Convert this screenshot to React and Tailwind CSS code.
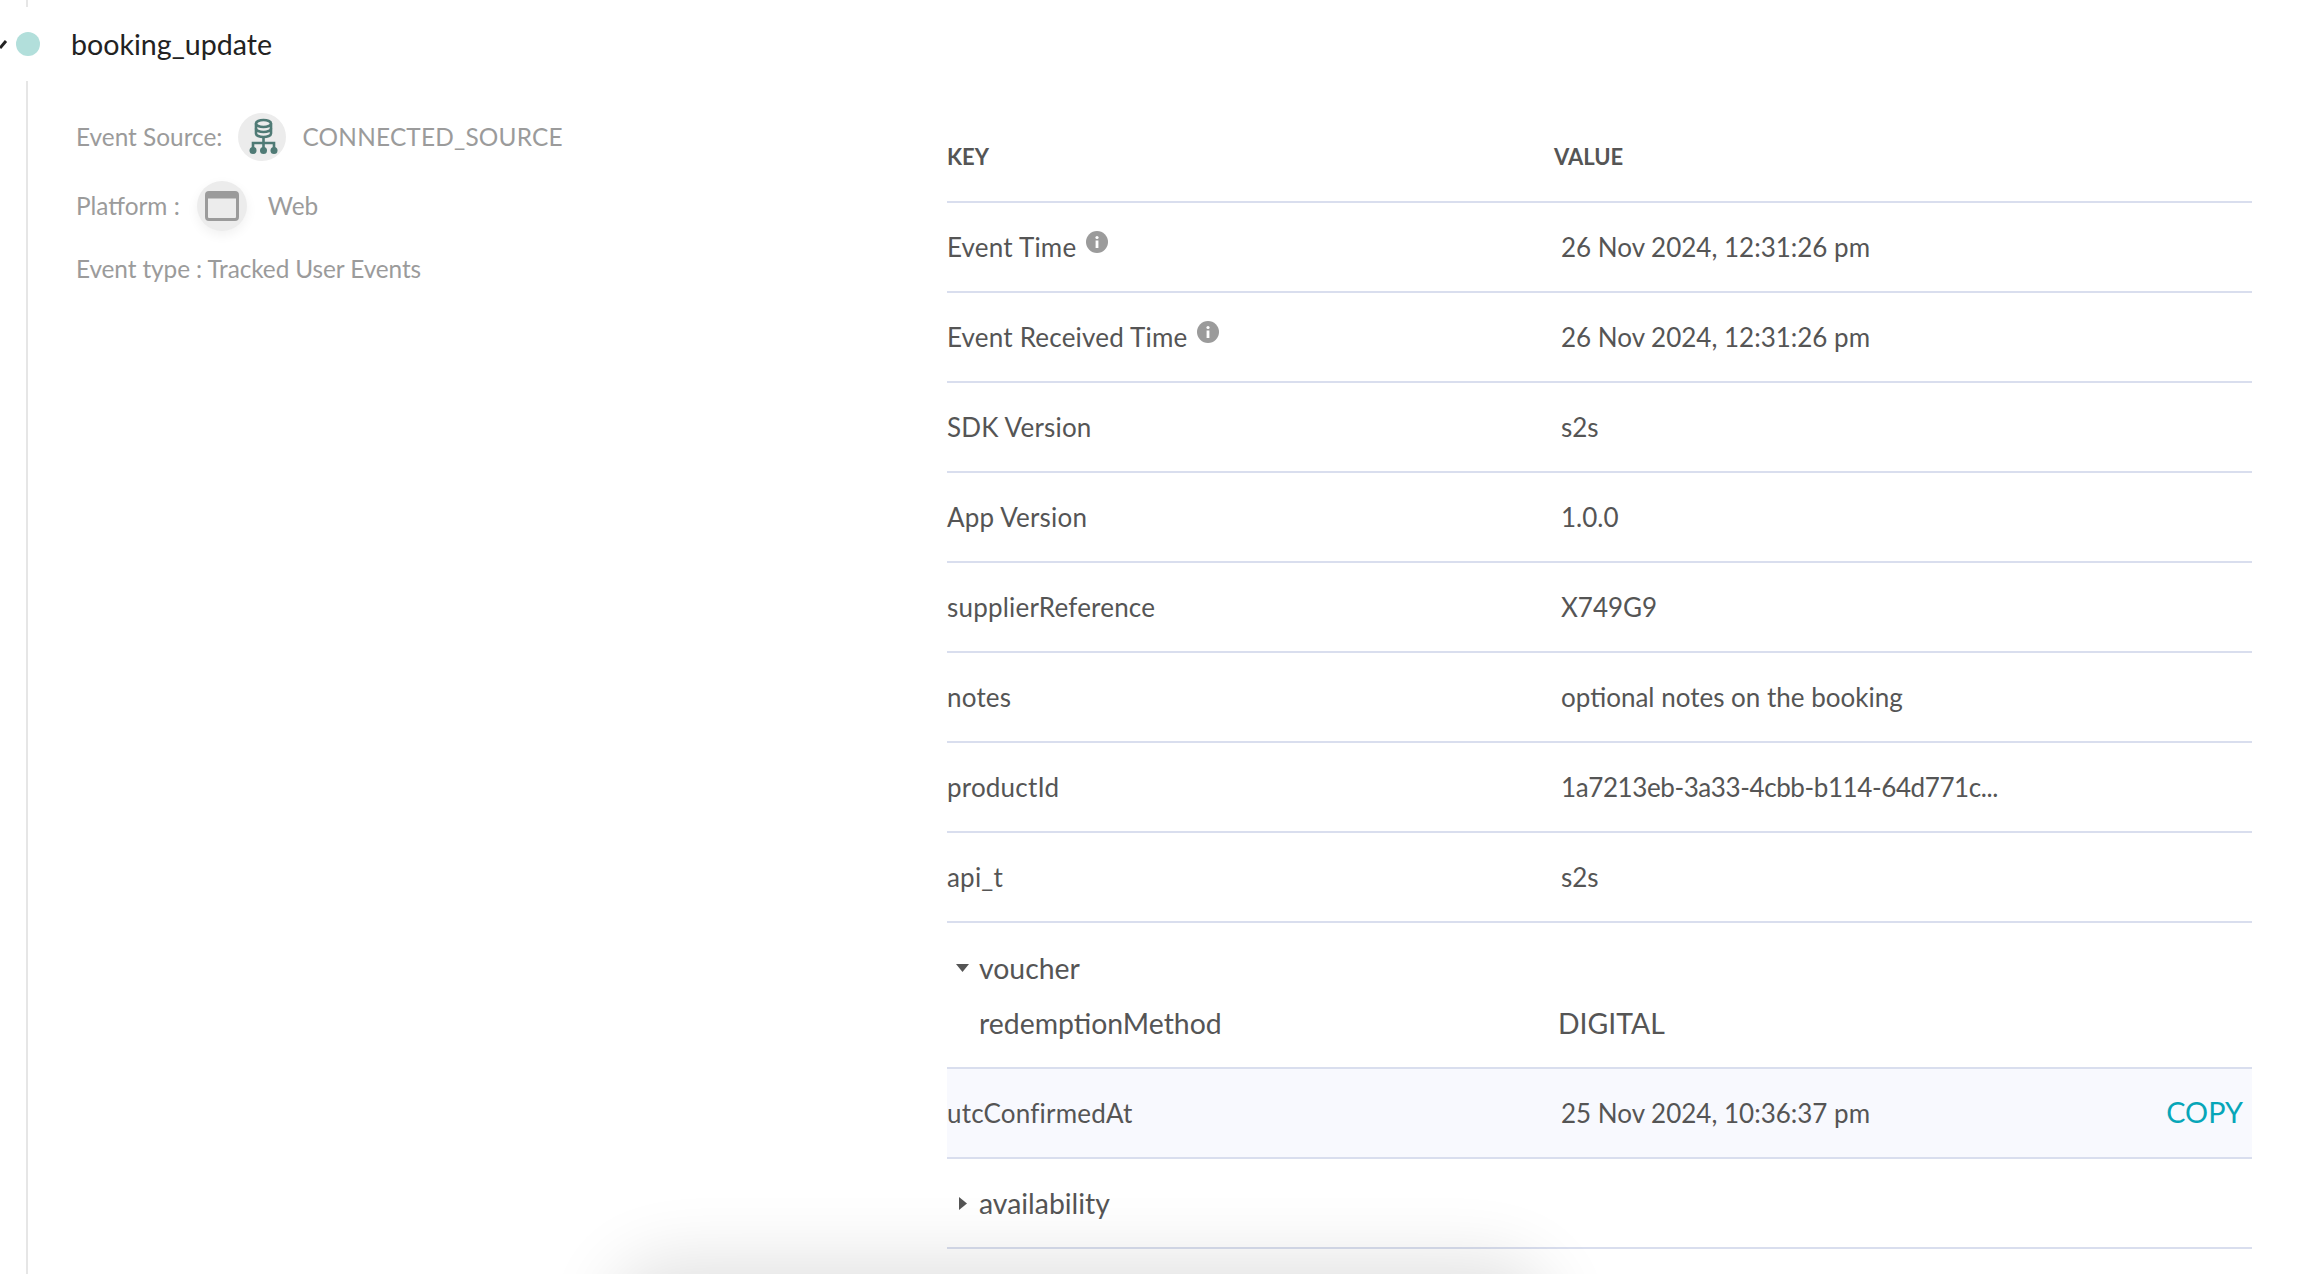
import React from "react";

const rows = [
  { key: "SDK Version", value: "s2s" },
  { key: "App Version", value: "1.0.0" },
  { key: "supplierReference", value: "X749G9" },
  { key: "notes", value: "optional notes on the booking" },
  { key: "productId", value: "1a7213eb-3a33-4cbb-b114-64d771c...", tight: true },
  { key: "api_t", value: "s2s" },
];

const InfoIcon = () => (
  <svg viewBox="0 0 22 22" className="ml-[10px] mb-[10px] h-[22px] w-[22px]">
    <circle cx="11" cy="11" r="11" fill="#9b9b9b" />
    <circle cx="11" cy="6.5" r="1.6" fill="#fff" />
    <rect x="9.6" y="9.5" width="2.8" height="7.5" fill="#fff" />
  </svg>
);

const SourceIcon = () => (
  <svg viewBox="0 0 48 48" className="h-[48px] w-[48px]">
    <g fill="none" stroke="#4f7a75" strokeWidth="2.6">
      <ellipse cx="25.5" cy="10.5" rx="7.5" ry="3.5" />
      <path d="M18 10.5v10c0 2 3.4 3.5 7.5 3.5s7.5-1.500 7.500-3.500v-10" />
      <path d="M18 15.500c0 2 3.400 3.500 7.500 3.500s7.500-1.500 7.500-3.500" />
      <path d="M25.500 24v12M15 36v-6h21v6" />
    </g>
    <circle cx="15" cy="37.500" r="3.500" fill="#4f7a75" />
    <circle cx="25.500" cy="37.500" r="3.500" fill="#4f7a75" />
    <circle cx="36" cy="37.500" r="3.500" fill="#4f7a75" />
  </svg>
);

const WindowIcon = () => (
  <svg viewBox="0 0 34 30" className="h-[30px] w-[34px]">
    <rect x="1.500" y="1.500" width="31" height="27" rx="2.500" fill="#ececec" stroke="#9b9b9b" strokeWidth="3" />
    <rect x="1.500" y="1.500" width="31" height="6" fill="#9b9b9b" />
  </svg>
);

const Row = ({ name, value, info, active, tight }) => (
  <div className={`flex h-[90px] items-center border-b-2 border-[#d9deee] ${active ? "bg-[#f8f9fe]" : ""}`}>
    <div className="flex w-[614px] items-center">
      <span className="tracking-[0.2px]">{name}</span>
      {info && <InfoIcon />}
    </div>
    <span className={`flex-1 ${tight ? "tracking-[-0.4px]" : ""}`}>{value}</span>
    {active && <button className="mr-[9px] text-[28.8px] text-[#07a6b8]">COPY</button>}
  </div>
);

const App = () => {
  return (
    <div className="relative h-[1274px] w-full overflow-hidden bg-white font-['Lato',sans-serif] text-[26px] text-[#555555]">
      {/* timeline stub above the dot */}
      <div className="ml-[26px] h-[7px] w-[2px] bg-[#e6e6e6]" />

      {/* event header */}
      <div className="flex h-[74px] items-center">
        <svg viewBox="0 0 16 14" className="h-[14px] w-[16px]">
          <path d="M0 11 L6 4" fill="none" stroke="#222" strokeWidth="3" />
        </svg>
        <div className="h-[24px] w-[24px] rounded-full bg-[#b2dfdb]" />
        <span className="ml-[31px] text-[28.6px] text-[#222]">booking_update</span>
      </div>

      <div className="ml-[26px] flex h-[1193px] border-l-2 border-[#e6e6e6]">
        {/* event meta */}
        <div className="w-[919px] pl-[48px] pt-[32px] text-[24.4px] text-[#9b9b9b]">
          <div className="flex h-[48px] items-center">
            <span>Event Source:</span>
            <div className="ml-[16px] h-[48px] w-[48px] rounded-full bg-[#ececec]">
              <SourceIcon />
            </div>
            <span className="ml-[16px] tracking-[0.2px]">CONNECTED_SOURCE</span>
          </div>
          <div className="mt-[20px] flex h-[50px] items-center">
            <span>Platform :</span>
            <div className="ml-[17px] flex h-[50px] w-[50px] items-center justify-center rounded-full bg-[#ececec] shadow-[0_4px_12px_rgba(0,0,0,0.06)]">
              <WindowIcon />
            </div>
            <span className="ml-[21px]">Web</span>
          </div>
          <div className="mt-[20px] tracking-[-0.1px]">Event type : Tracked User Events</div>
        </div>

        {/* key / value table */}
        <div className="w-[1305px] pt-[40px]">
          <div className="flex h-[82px] items-center border-b-2 border-[#d9deee] pb-[10px] text-[22px] font-bold">
            <span className="w-[607px]">KEY</span>
            <span>VALUE</span>
          </div>
          <Row name="Event Time" value="26 Nov 2024, 12:31:26 pm" info />
          <Row name="Event Received Time" value="26 Nov 2024, 12:31:26 pm" info />
          {rows.map((r) => (
            <Row key={r.key} name={r.key} value={r.value} tight={r.tight} />
          ))}
          <div className="h-[146px] border-b-2 border-[#d9deee] pt-[24px] text-[28.4px]">
            <div className="flex items-center">
              <svg viewBox="0 0 13 8" className="ml-[9px] mr-[10px] h-[8px] w-[13px]">
                <path d="M0 0h13L6.500 8z" fill="#555" />
              </svg>
              <span>voucher</span>
            </div>
            <div className="mt-[12px] flex pl-[32px]">
              <span className="w-[579px]">redemptionMethod</span>
              <span>DIGITAL</span>
            </div>
          </div>
          <Row name="utcConfirmedAt" value="25 Nov 2024, 10:36:37 pm" active />
          <div className="flex h-[90px] items-center border-b-2 border-[#d9deee] text-[28.4px]">
            <svg viewBox="0 0 8 13" className="ml-[12px] mr-[12px] h-[13px] w-[8px]">
              <path d="M0 0l8 6.500L0 13z" fill="#555" />
            </svg>
            <span>availability</span>
          </div>
        </div>
      </div>

      {/* shadow of something just below the fold */}
      <div className="absolute left-[640px] top-[1290px] h-[60px] w-[880px] rounded-full shadow-[0_0_70px_30px_rgba(0,0,0,0.12)]" />
    </div>
  );
};

export default App;
